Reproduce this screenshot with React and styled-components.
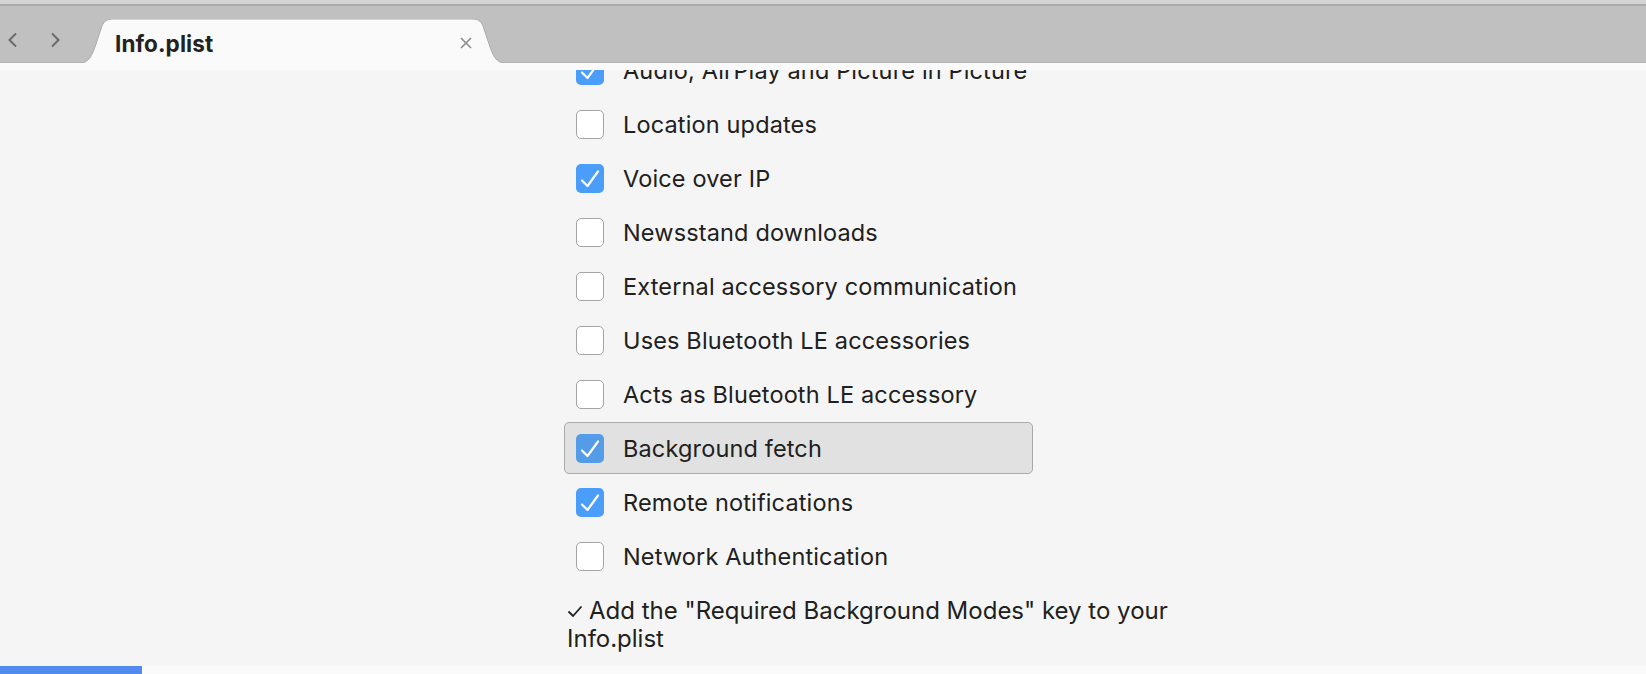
import React from "react";
import styled, { createGlobalStyle } from "styled-components";

const GlobalStyle = createGlobalStyle`
  html, body { margin: 0; padding: 0; background: #f5f5f5; }
  body { font-family: Inter, "Noto Sans", "Liberation Sans", sans-serif; -webkit-font-smoothing: antialiased; }
`;

const Window = styled.div`
  width: 1646px;
  height: 674px;
  display: flex;
  flex-direction: column;
  overflow: hidden;
  background: #f5f5f5;
`;

const TopEdge = styled.div`
  height: 4px;
  background: #d4d4d4;
  border-bottom: 2px solid #ababab;
  flex: none;
`;

const TabBar = styled.div`
  height: 56px;
  flex: none;
  background: #c0c0c0;
  border-bottom: 1px solid #b3b3b3;
  display: flex;
  align-items: flex-end;
  position: relative;
`;

const NavGroup = styled.div`
  display: flex;
  align-items: center;
  height: 100%;
  padding-left: 7px;
  gap: 32px;
  width: 80px;
  box-sizing: border-box;
`;

const NavButton = styled.div`
  width: 11px;
  height: 16px;
  display: flex;
  align-items: center;
  justify-content: center;
  margin-top: 12px;
`;

const Tab = styled.div`
  position: relative;
  width: 425px;
  height: 44px;
  margin-bottom: -1px;
  display: flex;
  align-items: center;
  box-sizing: border-box;
  padding: 0 33px 0 35px;
`;

const TabShape = styled.svg`
  position: absolute;
  inset: 0;
  width: 100%;
  height: 100%;
`;

const TabTitle = styled.span`
  position: relative;
  flex: 1;
  font-size: 22.5px;
  font-weight: 700;
  color: #222;
  letter-spacing: 0.1px;
  margin-top: 4px;
`;

const CloseIcon = styled.svg`
  position: relative;
  width: 12px;
  height: 12px;
  margin-top: 4px;
`;

const Strip = styled.div`
  height: 7px;
  flex: none;
  background: #fafafa;
`;

const Content = styled.div`
  flex: 1;
  overflow: hidden;
  padding-left: 564px;
`;

const List = styled.div`
  width: 469px;
  display: flex;
  flex-direction: column;
  gap: 2px;
  margin-top: -26px;
`;

const Row = styled.div`
  height: 52px;
  box-sizing: border-box;
  display: flex;
  align-items: center;
  gap: 19px;
  padding-left: 11px;
  border-radius: 5px;
  border: 1.5px solid ${(p) => (p.$selected ? "#a9a9a9" : "transparent")};
  background: ${(p) => (p.$selected ? "#e1e1e1" : "transparent")};
`;

const Box = styled.div`
  width: 28px;
  height: 29px;
  box-sizing: border-box;
  border-radius: 5px;
  flex: none;
  display: flex;
  align-items: center;
  justify-content: center;
  background: ${(p) => (p.$checked ? (p.$dim ? "#549be8" : "#4a9df8") : "#ffffff")};
  border: ${(p) => (p.$checked ? "none" : "1px solid #a4a4a4")};
`;

const Label = styled.span`
  font-size: 23.5px;
  color: #202020;
  letter-spacing: 0.15px;
  white-space: nowrap;
`;

const Note = styled.div`
  margin-top: 15px;
  padding-left: 3px;
  font-size: 24px;
  line-height: 28px;
  color: #202020;
  white-space: nowrap;
`;

const CheckGlyph = styled.svg`
  width: 16px;
  height: 13px;
  margin-right: 6px;
  vertical-align: 1px;
`;

const StatusBar = styled.div`
  height: 8px;
  flex: none;
  background: #fafafa;
  display: flex;
`;

const Progress = styled.div`
  width: 142px;
  background: #518bef;
`;

const items = [
  { label: "Audio, AirPlay and Picture in Picture", checked: true },
  { label: "Location updates", checked: false },
  { label: "Voice over IP", checked: true },
  { label: "Newsstand downloads", checked: false },
  { label: "External accessory communication", checked: false },
  { label: "Uses Bluetooth LE accessories", checked: false },
  { label: "Acts as Bluetooth LE accessory", checked: false },
  { label: "Background fetch", checked: true, selected: true },
  { label: "Remote notifications", checked: true },
  { label: "Network Authentication", checked: false },
];

function Checkbox({ checked, dim }) {
  return (
    <Box $checked={checked} $dim={dim}>
      {checked && (
        <svg width="28" height="29" viewBox="0 0 28 29">
          <path
            d="M6 16.5 L11.5 22 L22 7.5"
            fill="none"
            stroke="#ffffff"
            strokeWidth="2.2"
            strokeLinecap="round"
            strokeLinejoin="round"
          />
        </svg>
      )}
    </Box>
  );
}

export default function App() {
  return (
    <>
      <GlobalStyle />
      <Window>
        <TopEdge />
        <TabBar>
          <NavGroup>
            <NavButton>
              <svg width="11" height="16" viewBox="0 0 11 16">
                <path d="M9 1.5 L2.5 8 L9 14.5" fill="none" stroke="#6a6a6a" strokeWidth="2" />
              </svg>
            </NavButton>
            <NavButton>
              <svg width="11" height="16" viewBox="0 0 11 16">
                <path d="M2 1.5 L8.5 8 L2 14.5" fill="none" stroke="#6a6a6a" strokeWidth="2" />
              </svg>
            </NavButton>
          </NavGroup>
          <Tab>
            <TabShape viewBox="0 0 425 44" preserveAspectRatio="none">
              <path
                d="M0 44 C9 44 12 36 15 28 L21 10 C23 3 26 0 33 0 L392 0 C399 0 402 3 404 10 L410 28 C413 36 416 44 425 44 Z"
                fill="#fafafa"
              />
              <path
                d="M0 44 C9 44 12 36 15 28 L21 10 C23 3 26 0 33 0 L392 0 C399 0 402 3 404 10 L410 28 C413 36 416 44 425 44"
                fill="none"
                stroke="#adadad"
                strokeWidth="1"
              />
            </TabShape>
            <TabTitle>Info.plist</TabTitle>
            <CloseIcon viewBox="0 0 12 12">
              <path d="M1 1 L11 11 M11 1 L1 11" stroke="#8c8c8c" strokeWidth="1.6" />
            </CloseIcon>
          </Tab>
        </TabBar>
        <Strip />
        <Content>
          <List>
            {items.map((it) => (
              <Row key={it.label} $selected={it.selected}>
                <Checkbox checked={it.checked} dim={it.selected} />
                <Label>{it.label}</Label>
              </Row>
            ))}
          </List>
          <Note>
            <CheckGlyph viewBox="0 0 16 13">
              <path d="M1.5 6.5 L6 11 L14.5 1.5" fill="none" stroke="#202020" strokeWidth="1.8" />
            </CheckGlyph>
            Add the "Required Background Modes" key to your
            <br />
            Info.plist
          </Note>
        </Content>
        <StatusBar>
          <Progress />
        </StatusBar>
      </Window>
    </>
  );
}
